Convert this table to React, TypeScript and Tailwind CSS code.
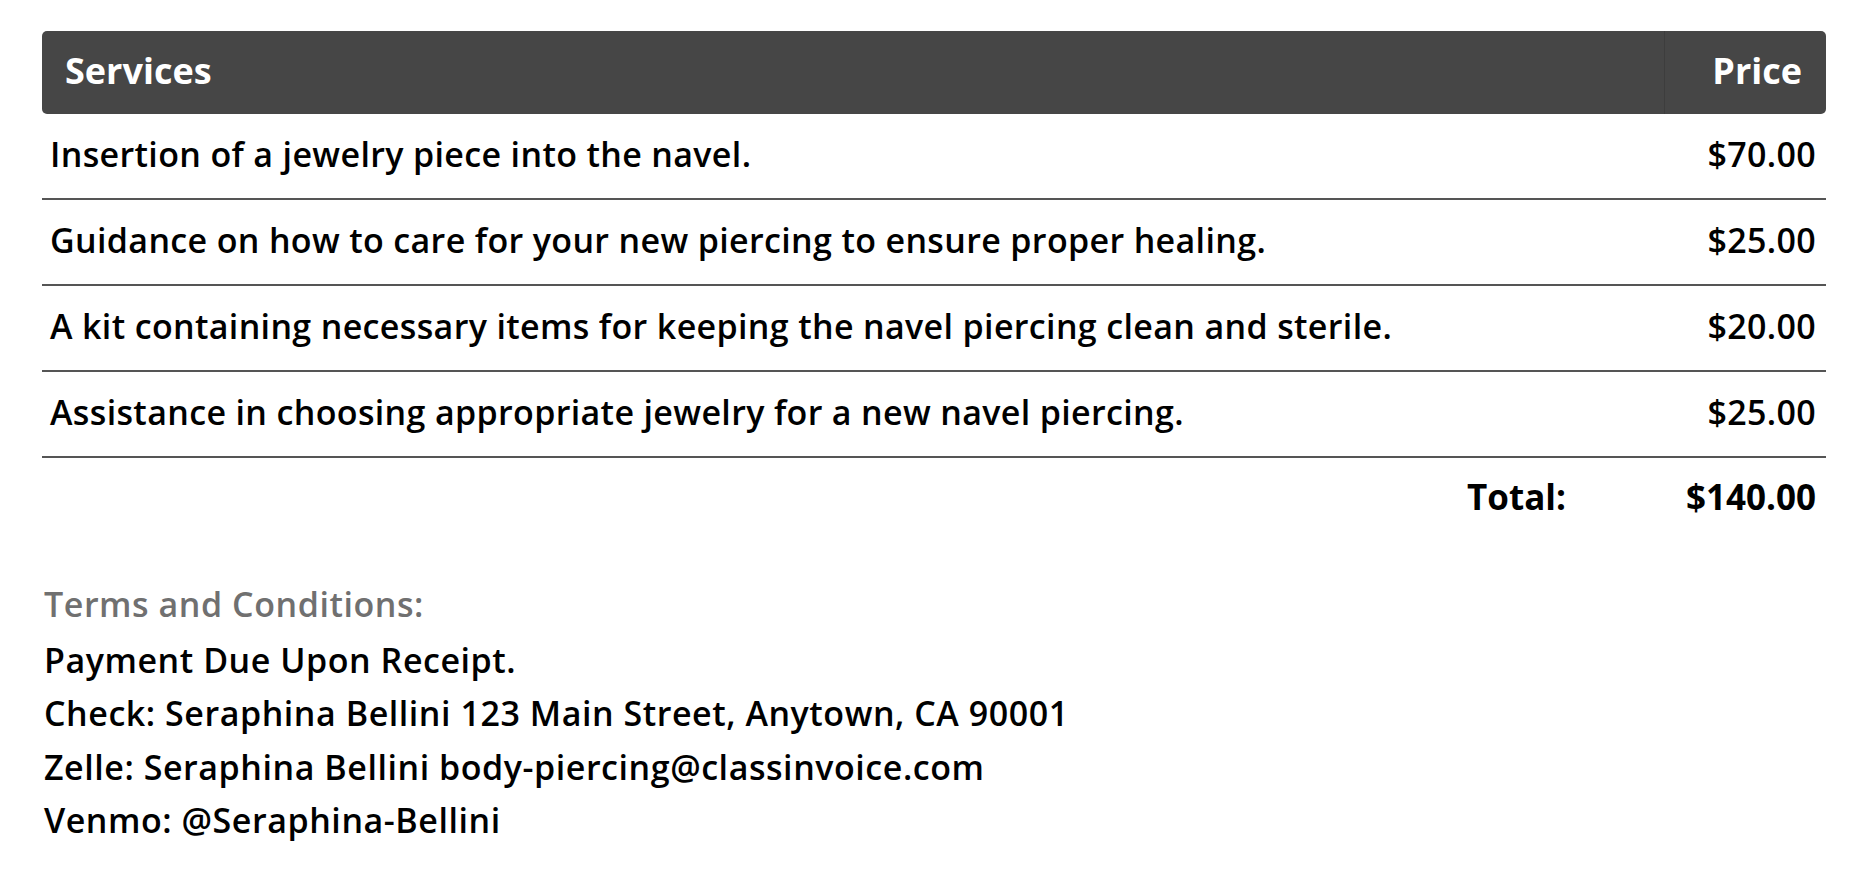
import React from "react";

const rows = [
  { d: "Insertion of a jewelry piece into the navel.", p: "$70.00" },
  { d: "Guidance on how to care for your new piercing to ensure proper healing.", p: "$25.00" },
  { d: "A kit containing necessary items for keeping the navel piercing clean and sterile.", p: "$20.00" },
  { d: "Assistance in choosing appropriate jewelry for a new navel piercing.", p: "$25.00" },
];

export default function App() {
  return (
    <div
      className="w-[1868px] h-[870px] bg-white overflow-hidden px-[42px] pt-[31px] text-black"
      style={{ fontFamily: "'Open Sans', 'Noto Sans', sans-serif" }}
    >
      <div className="flex h-[83px] bg-[#464646] rounded-[5px] text-white font-bold text-[36px]">
        <div className="flex-1 flex items-center pl-[23px] pb-[3px]">Services</div>
        <div className="w-[162px] flex items-center justify-end pr-[24px] pb-[3px] border-l border-[#3d3d3d]">
          Price
        </div>
      </div>
      {rows.map((r) => (
        <div
          key={r.d}
          className="flex h-[86px] border-b-[2px] border-[#555555] text-[34px] font-semibold tracking-[0.35px]"
        >
          <div className="flex-1 flex items-center pl-[8px] pb-[4px]">{r.d}</div>
          <div className="w-[162px] flex items-center justify-end pr-[10px] pb-[4px]">{r.p}</div>
        </div>
      ))}
      <div className="flex h-[86px] justify-end text-[35px] font-bold">
        <div className="flex items-center pr-[98px] pb-[8px]">Total:</div>
        <div className="w-[162px] flex items-center justify-end pr-[10px] pb-[8px]">$140.00</div>
      </div>
      <div className="pl-[2px] pt-[34px] text-[34px] font-semibold tracking-[0.55px] leading-[53.5px]">
        <div className="text-[#707070] mb-[2px]">Terms and Conditions:</div>
        <div>Payment Due Upon Receipt.</div>
        <div>Check: Seraphina Bellini 123 Main Street, Anytown, CA 90001</div>
        <div>Zelle: Seraphina Bellini body-piercing@classinvoice.com</div>
        <div>Venmo: @Seraphina-Bellini</div>
      </div>
    </div>
  );
}
